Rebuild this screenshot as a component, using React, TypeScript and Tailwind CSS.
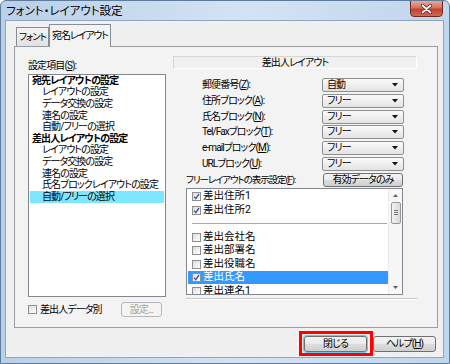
import type { ReactNode } from 'react'

const font = "font-['Roboto',_'Noto_Sans_CJK_JP',_sans-serif] [font-feature-settings:'palt']"

function Check({ checked = false }: { checked?: boolean }) {
  return (
    <span className="w-[9px] h-[9px] shrink-0 border border-[#8f8f8f] bg-gradient-to-br from-[#dcdcdc] to-[#ffffff] flex items-center justify-center">
      {checked && (
        <svg width="7" height="7" viewBox="0 0 7 7">
          <path d="M1 3.6 L2.8 5.6 L6 1" fill="none" stroke="#3b5ca8" strokeWidth="1.4" />
        </svg>
      )}
    </span>
  )
}

function Combo({ value }: { value: string }) {
  return (
    <div className="w-[82px] h-[14px] border border-[#8e8f8f] rounded-[2px] bg-gradient-to-b from-[#fafafa] to-[#e3e3e3] flex items-center pl-[4px] pr-[5px]">
      <span className="flex-1 text-[10px] leading-[12px] whitespace-nowrap">{value}</span>
      <svg width="6" height="4" viewBox="0 0 6 4">
        <path d="M0 0 H6 L3 3.5 Z" fill="#111" />
      </svg>
    </div>
  )
}

function Btn({ children, w, disabled = false }: { children: ReactNode; w: string; disabled?: boolean }) {
  return (
    <div
      className={`${w} h-full rounded-[3px] border flex items-center justify-center text-[10px] leading-none whitespace-nowrap ${
        disabled
          ? 'border-[#b5b9bc] bg-[#f4f4f4] text-[#a3a3a3]'
          : 'border-[#707070] bg-[linear-gradient(to_bottom,#f3f3f3_0%,#ebebeb_50%,#dddddd_51%,#cfcfcf_100%)] text-black'
      }`}
    >
      {children}
    </div>
  )
}

const leftItems: { text: string; bold?: boolean; selected?: boolean }[] = [
  { text: '宛先レイアウトの設定', bold: true },
  { text: 'レイアウトの設定' },
  { text: 'データ交換の設定' },
  { text: '連名の設定' },
  { text: '自動/フリーの選択' },
  { text: '差出人レイアウトの設定', bold: true },
  { text: 'レイアウトの設定' },
  { text: 'データ交換の設定' },
  { text: '連名の設定' },
  { text: '氏名ブロックレイアウトの設定' },
  { text: '自動/フリーの選択', selected: true },
]

const formRows: { label: ReactNode; value: string }[] = [
  { label: <>郵便番号(<u>Z</u>):</>, value: '自動' },
  { label: <>住所ブロック(<u>A</u>):</>, value: 'フリー' },
  { label: <>氏名ブロック(<u>N</u>):</>, value: 'フリー' },
  { label: <>Tel/Faxブロック(<u>T</u>):</>, value: 'フリー' },
  { label: <>e-mailブロック(<u>M</u>):</>, value: 'フリー' },
  { label: <>URLブロック(<u>U</u>):</>, value: 'フリー' },
]

const freeItems: { text?: string; checked?: boolean; selected?: boolean; sep?: boolean }[] = [
  { text: '差出住所1', checked: true },
  { text: '差出住所2', checked: true },
  { sep: true },
  { text: '差出会社名' },
  { text: '差出部署名' },
  { text: '差出役職名' },
  { text: '差出氏名', checked: true, selected: true },
  { text: '差出連名1' },
]

export default function App() {
  return (
    <div
      className={`relative w-[450px] h-[364px] overflow-hidden rounded-t-[6px] border border-[#5f7b9c] bg-[linear-gradient(to_right,#b9d0e9,#d3e3f3_55%,#c0d6ed)] flex flex-col text-black tracking-[-0.9px] ${font}`}
    >
      {/* title bar */}
      <div className="h-[19px] flex items-start shrink-0">
        <span className="ml-[5px] mt-[3px] text-[11.5px] leading-[14px] tracking-normal whitespace-nowrap">フォント・レイアウト設定</span>
        <div className="ml-auto mr-[6px] -mt-[1px] w-[33px] h-[17px] rounded-b-[4px] border border-[#6e2b22] bg-[linear-gradient(to_bottom,#e9a99c_0%,#d6705f_45%,#c2412f_55%,#d06a57_100%)] flex items-center justify-center">
          <svg width="11" height="10" viewBox="0 0 11 10">
            <path d="M1.5 1.5 L9.5 8.5 M9.5 1.5 L1.5 8.5" stroke="#5a1c16" strokeWidth="3.2" strokeLinecap="round" />
            <path d="M1.5 1.5 L9.5 8.5 M9.5 1.5 L1.5 8.5" stroke="#ffffff" strokeWidth="1.8" strokeLinecap="round" />
          </svg>
        </div>
      </div>

      {/* client area */}
      <div className="ml-[4px] w-[439px] h-[338px] border border-[#8ea6c1] bg-[#f0f0f0] flex flex-col shrink-0">
        {/* tabs */}
        <div className="h-[25px] flex items-end pl-[10px] shrink-0">
          <div className="h-[19px] w-[33px] border border-b-0 border-[#898c95] bg-gradient-to-b from-[#f4f4f4] to-[#e1e1e1] flex items-center justify-center text-[9.5px] leading-none tracking-[-1px] whitespace-nowrap">
            フォント
          </div>
          <div className="relative z-10 -mb-[1px] h-[23px] w-[62px] border border-b-0 border-[#898c95] bg-[#f3f3f3] flex items-start justify-center pt-[4px] text-[10px] leading-[13px] tracking-[-1.1px] whitespace-nowrap">
            宛名レイアウト
          </div>
        </div>

        {/* tab panel */}
        <div className="ml-[8px] w-[424px] h-[282px] border border-[#9a9ca3] bg-[#f3f3f3] flex shrink-0">
          {/* left column */}
          <div className="w-[158px] pl-[13px] pt-[12px] flex flex-col">
            <div className="h-[14px] text-[10px] leading-[14px] whitespace-nowrap">
              設定項目(<u>S</u>):
            </div>
            <div className="mt-[1px] w-[138px] h-[223px] border border-[#828790] bg-white flex flex-col overflow-hidden">
              {leftItems.map((it, i) => (
                <div
                  key={i}
                  className={`h-[11.6px] shrink-0 mx-[1px] flex items-center text-[10px] leading-none whitespace-nowrap ${
                    it.bold ? 'pl-[2px] font-bold' : 'pl-[12px]'
                  } ${it.selected ? 'bg-[#7fe6ff]' : ''}`}
                >
                  {it.text}
                </div>
              ))}
            </div>
            <div className="mt-[5px] h-[15px] flex items-center">
              <Check />
              <span className="ml-[3px] w-[81px] text-[10px] leading-none whitespace-nowrap">差出人データ別</span>
              <div className="h-[15px]">
                <Btn w="w-[41px]" disabled>
                  設定...
                </Btn>
              </div>
            </div>
          </div>

          {/* right column */}
          <div className="pt-[9px] flex flex-col">
            <div className="w-[244px] h-[13px] border border-[#d6d6d6] border-r-white border-b-white bg-[#f0f0f0] flex items-center justify-center text-[10px] leading-none whitespace-nowrap">
              差出人レイアウト
            </div>

            <div className="mt-[9px] flex flex-col gap-[1.8px]">
              {formRows.map((r, i) => (
                <div key={i} className="h-[14px] flex items-center">
                  <span className="ml-[29px] w-[120px] text-[10px] leading-none whitespace-nowrap">{r.label}</span>
                  <Combo value={r.value} />
                </div>
              ))}
            </div>

            <div className="mt-[2px] h-[14px] flex items-center">
              <span className="ml-[13px] w-[137px] text-[9.5px] leading-none tracking-[-1.1px] whitespace-nowrap">
                フリーレイアウトの表示設定(<u>F</u>):
              </span>
              <div className="h-[14px]">
                <Btn w="w-[80px]">有効データのみ</Btn>
              </div>
            </div>

            <div className="mt-[1px] ml-[13px] w-[217px] h-[107px] border border-[#828790] bg-white flex overflow-hidden">
              <div className="flex-1 pl-[1px] pt-[1px] flex flex-col">
                {freeItems.map((it, i) =>
                  it.sep ? (
                    <div key={i} className="h-[13.5px] shrink-0 flex items-center pl-[4px] pr-[1px]">
                      <div className="w-full h-[1px] bg-[#a8a8a8]" />
                    </div>
                  ) : (
                    <div
                      key={i}
                      className={`h-[13.5px] shrink-0 flex items-center pl-[4px] ${
                        it.selected ? 'bg-[#3399ff] text-white' : ''
                      }`}
                    >
                      <Check checked={it.checked} />
                      <span className="ml-[2px] text-[10.5px] leading-none tracking-normal whitespace-nowrap">{it.text}</span>
                    </div>
                  )
                )}
              </div>
              {/* scrollbar */}
              <div className="w-[14px] bg-[#f7f7f7] border-l border-[#ececec] flex flex-col items-center">
                <div className="h-[13px] w-full flex items-center justify-center">
                  <svg width="5" height="3" viewBox="0 0 5 3">
                    <path d="M0 3 L2.5 0 L5 3 Z" fill="#606060" />
                  </svg>
                </div>
                <div className="w-[10px] h-[22px] rounded-[2px] border border-[#979797] bg-gradient-to-r from-[#f2f2f2] to-[#d9d9d9] flex flex-col items-center justify-center gap-[1px]">
                  <div className="w-[4px] h-[1px] bg-[#777]" />
                  <div className="w-[4px] h-[1px] bg-[#777]" />
                  <div className="w-[4px] h-[1px] bg-[#777]" />
                </div>
                <div className="mt-auto h-[13px] w-full flex items-center justify-center">
                  <svg width="5" height="3" viewBox="0 0 5 3">
                    <path d="M0 0 L5 0 L2.5 3 Z" fill="#606060" />
                  </svg>
                </div>
              </div>
            </div>

            <div className="mt-[3px] ml-[13px] w-[231px] h-[2px] border-t border-[#c8c8c8] border-b border-b-white" />
          </div>
        </div>

        {/* bottom buttons */}
        <div className="mt-[8px] h-[16px] flex justify-end pr-[7px] gap-[6px]">
          <div className="h-[16px] rounded-[3px] ring-1 ring-[#6ec4f0]">
            <Btn w="w-[63px]">閉じる</Btn>
          </div>
          <div className="h-[16px]">
            <Btn w="w-[63px]">
              ヘルプ(<u>H</u>)
            </Btn>
          </div>
        </div>
      </div>

      {/* red highlight around close button */}
      <div className="absolute left-[298px] top-[330px] w-[74px] h-[25px] border-[3px] border-[#ff0000]" />
    </div>
  )
}
